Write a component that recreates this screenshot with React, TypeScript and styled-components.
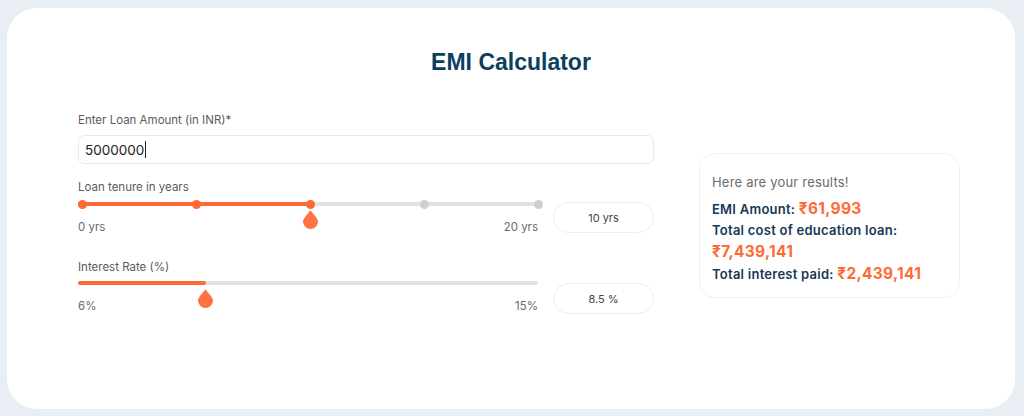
import React from "react";
import styled, { createGlobalStyle } from "styled-components";

const Global = createGlobalStyle`
  html, body { margin: 0; padding: 0; background: #e9edf4; }
  body { font-family: Inter, "Noto Sans", sans-serif; }
  * { box-sizing: border-box; }
`;

const Page = styled.div`
  width: 1024px;
  height: 416px;
  padding: 8px 9px 7px 7px;
`;

const Card = styled.div`
  height: 401px;
  background: #ffffff;
  border-radius: 30px;
  padding-top: 39px;
`;

const Title = styled.h1`
  margin: 0 0 35px 0;
  text-align: center;
  font-family: "Liberation Sans", Arial, sans-serif;
  font-weight: 700;
  font-size: 23px;
  line-height: 30px;
  color: #0c3f5e;
`;

const Main = styled.div`
  display: flex;
  align-items: flex-start;
  gap: 45px;
  padding-left: 71px;
`;

const Form = styled.div`
  width: 576px;
  flex-shrink: 0;
  display: flex;
  flex-direction: column;
`;

const Label = styled.div<{ $mt?: number }>`
  font-size: 11.5px;
  line-height: 16px;
  color: #5b5b5b;
  margin-top: ${(p) => p.$mt ?? 0}px;
`;

const Field = styled.div`
  margin-top: 7px;
  height: 29px;
  border: 1px solid #e6eaf1;
  border-radius: 6px;
  display: flex;
  align-items: center;
  padding-left: 6px;
  font-size: 13.5px;
  color: #222;
`;

const Caret = styled.span`
  display: inline-block;
  width: 1px;
  height: 17px;
  background: #222;
  margin-left: 1px;
`;

const SliderRow = styled.div<{ $mt: number }>`
  display: flex;
  align-items: flex-start;
  gap: 15px;
  margin-top: ${(p) => p.$mt}px;
`;

const SliderBlock = styled.div`
  width: 460px;
  display: flex;
  flex-direction: column;
`;

const TrackArea = styled.div`
  position: relative;
  height: 16px;
`;

const Track = styled.div<{ $right: number }>`
  position: absolute;
  left: 0;
  right: ${(p) => p.$right}px;
  top: 6px;
  height: 4px;
  border-radius: 2px;
  background: #e2e2e2;
`;

const Fill = styled.div`
  position: absolute;
  left: 0;
  top: 0;
  bottom: 0;
  border-radius: 2px;
  background: #fe6a36;
`;

const Dot = styled.div<{ $on: boolean }>`
  position: absolute;
  top: 3.5px;
  width: 9px;
  height: 9px;
  margin-left: -4.5px;
  border-radius: 50%;
  background: ${(p) => (p.$on ? "#fe6a36" : "#cfcfcf")};
`;

const Thumb = styled.svg`
  position: absolute;
  top: 14px;
  width: 15px;
  height: 19px;
  margin-left: -7.5px;
  overflow: visible;
`;

const Ticks = styled.div`
  display: flex;
  justify-content: space-between;
  margin-top: 7px;
  font-size: 11.5px;
  line-height: 16px;
  color: #6a6a6a;
`;

const ValueBox = styled.div<{ $mt: number }>`
  margin-top: ${(p) => p.$mt}px;
  width: 101px;
  height: 31px;
  border: 1px solid #e8eef8;
  border-radius: 16px;
  display: flex;
  align-items: center;
  justify-content: center;
  font-size: 11px;
  color: #444;
`;

const Results = styled.div`
  margin-top: 41px;
  width: 261px;
  flex-shrink: 0;
  height: 145px;
  border: 1px solid #edf0f6;
  border-radius: 16px;
  padding: 19px 12px 0 12px;
`;

const ResultsHead = styled.div`
  font-size: 13px;
  line-height: 18px;
  letter-spacing: 0.2px;
  color: #6b6b6b;
  margin-bottom: 7px;
`;

const Line = styled.div<{ $h?: number }>`
  font-size: 13px;
  font-weight: 600;
  letter-spacing: 0.25px;
  line-height: ${(p) => p.$h ?? 21}px;
  color: #163a55;
  white-space: nowrap;
`;

const Amount = styled.span`
  font-size: 15.5px;
  font-weight: 700;
  letter-spacing: 0.3px;
  color: #fe6a36;
`;

const Slider: React.FC<{
  pct: number;
  start: number;
  end: number;
  trackRight: number;
  dots?: number;
  minLabel: string;
  maxLabel: string;
}> = ({ pct, start, end, trackRight, dots, minLabel, maxLabel }) => {
  const width = end - start;
  const x = start + width * pct;
  return (
    <SliderBlock>
      <TrackArea>
        <Track $right={trackRight}>
          <Fill style={{ width: x }} />
        </Track>
        {dots
          ? Array.from({ length: dots }).map((_, i) => {
              const dx = start + (width * i) / (dots - 1);
              return <Dot key={i} $on={dx <= x + 0.5} style={{ left: dx }} />;
            })
          : null}
        <Thumb style={{ left: x }} viewBox="0 0 15 19">
          <path d="M7.5 0 C6 3 0 8 0 11.5 A7.5 7.5 0 0 0 15 11.5 C15 8 9 3 7.5 0 Z" fill="#fe7243" />
        </Thumb>
      </TrackArea>
      <Ticks>
        <span>{minLabel}</span>
        <span>{maxLabel}</span>
      </Ticks>
    </SliderBlock>
  );
};

export default function App() {
  return (
    <>
      <Global />
      <Page>
        <Card>
          <Title>EMI Calculator</Title>
          <Main>
            <Form>
              <Label>Enter Loan Amount (in INR)*</Label>
              <Field>
                5000000
                <Caret />
              </Field>
              <Label $mt={15}>Loan tenure in years</Label>
              <SliderRow $mt={1}>
                <Slider pct={0.5} start={4} end={460} trackRight={-2} dots={5} minLabel="0 yrs" maxLabel="20 yrs" />
                <ValueBox $mt={6}>10 yrs</ValueBox>
              </SliderRow>
              <Label $mt={24}>Interest Rate (%)</Label>
              <SliderRow $mt={0}>
                <Slider pct={2.5 / 9} start={0} end={460} trackRight={0} minLabel="6%" maxLabel="15%" />
                <ValueBox $mt={8}>8.5 %</ValueBox>
              </SliderRow>
            </Form>
            <Results>
              <ResultsHead>Here are your results!</ResultsHead>
              <Line $h={22}>
                EMI Amount: <Amount>₹61,993</Amount>
              </Line>
              <Line>Total cost of education loan:</Line>
              <Line $h={22}>
                <Amount>₹7,439,141</Amount>
              </Line>
              <Line $h={22}>
                Total interest paid: <Amount>₹2,439,141</Amount>
              </Line>
            </Results>
          </Main>
        </Card>
      </Page>
    </>
  );
}
